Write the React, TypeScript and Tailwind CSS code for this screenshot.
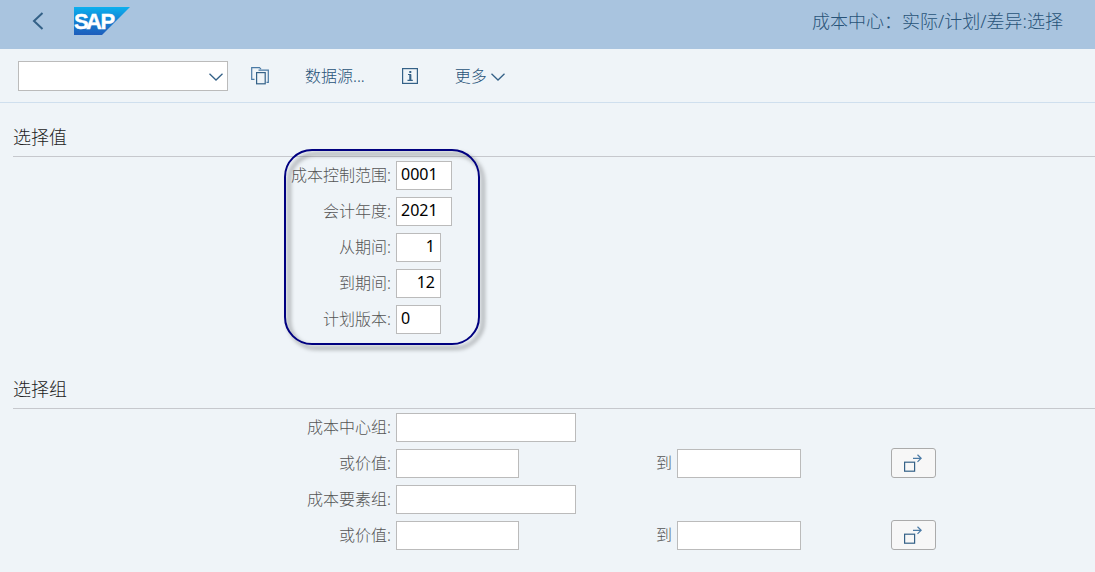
import type { ReactNode } from "react";

function SapLogo() {
  return (
    <svg width="56" height="28" viewBox="0 0 56 28" role="img" aria-label="SAP">
      <defs>
        <linearGradient id="sap-blue" x1="0" y1="0" x2="0" y2="1">
          <stop offset="0" stopColor="#0cb0ee" />
          <stop offset="0.5" stopColor="#1480d2" />
          <stop offset="1" stopColor="#1f5dbb" />
        </linearGradient>
      </defs>
      <path d="M0 0H56L28 28H0Z" fill="url(#sap-blue)" />
      <text
        x="0 12 26.5"
        y="22"
        fontFamily="Liberation Sans, sans-serif"
        fontSize="22"
        fontWeight="700"
        fill="#fff"
        stroke="#fff"
        strokeWidth="0.4"
      >
        SAP
      </text>
    </svg>
  );
}

function ChevronDown({ className }: { className?: string }) {
  return (
    <svg className={className} width="14" height="8" viewBox="0 0 14 8" fill="none" stroke="#346187" strokeWidth="1.3">
      <path d="M0.5 0.7L7 7L13.5 0.7" />
    </svg>
  );
}

function CopyIcon() {
  return (
    <svg width="18" height="18" viewBox="0 0 18 18" fill="none" stroke="#4a7aa5" strokeWidth="1.2">
      <path d="M3.5 12.4H0.7V0.7H8.5L10 2.2" />
      <path d="M7.5 3.2H17.3V15.4H15.5" />
      <rect x="5.6" y="5.6" width="8.6" height="11.2" stroke="#346187" />
    </svg>
  );
}

function InfoIcon() {
  return (
    <svg width="16" height="16" viewBox="0 0 16 16" fill="none" stroke="#346187">
      <rect x="0.6" y="0.6" width="14.8" height="14.8" strokeWidth="1.2" />
      <path d="M6 6.5H8.5V12M5.5 12.4H10.8" strokeWidth="1.2" />
      <path d="M8.3 6.5V12.4" strokeWidth="2" />
      <path d="M8.3 3V5" strokeWidth="2" />
    </svg>
  );
}

function MultiSelectIcon() {
  return (
    <svg width="18" height="18" viewBox="0 0 18 18" fill="none" stroke="#346187" strokeWidth="1.2">
      <rect x="0.6" y="8.2" width="10" height="9" />
      <path d="M9 4.3H17M13.5 0.7L17.2 4.3L13.5 7.9" stroke="#4a7aa5" />
    </svg>
  );
}

const inputClass =
  "h-[29px] border border-[#bbbbbb] bg-white pr-[5px] pl-1 pb-[3px] text-base font-normal text-black outline-none";
const labelClass = "mr-[5px] shrink-0 text-right text-base leading-[29px] text-[#555555]";

function Section({ title, children }: { title: string; children: ReactNode }) {
  return (
    <section className="pb-[21px] pl-[13px]">
      <h2 className="border-b border-[#c6c8cd] pt-5 pb-[5px] text-lg leading-7 text-[#222222]">{title}</h2>
      <div className="relative flex flex-col gap-[6px] pt-[3px]">{children}</div>
    </section>
  );
}

type FieldProps = {
  id: string;
  label: string;
  width: string;
  value?: string;
  children?: ReactNode;
};

function Field({ id, label, width, value, children }: FieldProps) {
  return (
    <div className="flex h-[30px] items-end">
      <label htmlFor={id} className={`${labelClass} w-[378px]`}>
        {label}:
      </label>
      <input id={id} type="text" defaultValue={value} className={`${inputClass} ${width}`} />
      {children}
    </div>
  );
}

function RangeEnd({ id }: { id: string }) {
  return (
    <>
      <label htmlFor={id} className={`${labelClass} w-[153px]`}>
        到
      </label>
      <input id={id} type="text" className={`${inputClass} w-[124px]`} />
      <button
        type="button"
        aria-label="多项选择"
        className="ml-[90px] flex h-[30px] w-[45px] items-center justify-center rounded-[3px] border border-[#ababab] bg-[#f7f7f7] pr-px"
      >
        <MultiSelectIcon />
      </button>
    </>
  );
}

export default function App() {
  return (
    <div className="min-h-screen bg-[#eff4f8] font-['Noto_Sans','Noto_Sans_CJK_SC',sans-serif] font-light">
      {/* Shell header */}
      <header className="flex h-[49px] items-center justify-between bg-[#a9c4df] pr-8 pb-[7px] pl-8">
        <div className="flex items-center gap-[30px]">
          <button type="button" aria-label="返回">
            <svg width="12" height="18" viewBox="0 0 12 18" fill="none" stroke="#346187" strokeWidth="2">
              <path d="M10.5 1L2 9L10.5 17" />
            </svg>
          </button>
          <SapLogo />
        </div>
        <h1 className="text-lg text-[#285378]">成本中心：实际/计划/差异:选择</h1>
      </header>

      {/* Toolbar */}
      <div className="flex h-[54px] items-center border-b border-[#cfdfee] pl-[18px] text-base text-[#285378]">
        <div className="relative">
          <select
            aria-label="命令"
            className="block h-[30px] w-[210px] appearance-none border border-[#bbbbbb] bg-white outline-none"
          >
            <option></option>
          </select>
          <ChevronDown className="pointer-events-none absolute top-[12px] right-[5px]" />
        </div>
        <button type="button" aria-label="复制" className="ml-[23px]">
          <CopyIcon />
        </button>
        <button type="button" className="ml-9">
          数据源...
        </button>
        <button type="button" aria-label="信息" className="ml-[37px]">
          <InfoIcon />
        </button>
        <button type="button" className="ml-[37px] flex items-center gap-[4px]">
          更多
          <ChevronDown className="mt-[3px]" />
        </button>
      </div>

      <main>
        <Section title="选择值">
          <Field id="area" label="成本控制范围" width="w-[56px]" value="0001" />
          <Field id="year" label="会计年度" width="w-[56px]" value="2021" />
          <Field id="from" label="从期间" width="w-[45px] text-right" value="1" />
          <Field id="to" label="到期间" width="w-[45px] text-right" value="12" />
          <Field id="version" label="计划版本" width="w-[45px]" value="0" />
          {/* Callout frame around the fields */}
          <div className="pointer-events-none absolute -top-2 left-[271px] h-[196px] w-[196px] rounded-[28px] border-2 border-[#000080] drop-shadow-[4px_4px_2px_rgba(0,0,0,0.5)]" />
        </Section>

        <Section title="选择组">
          <Field id="center-group" label="成本中心组" width="w-[180px]" />
          <Field id="center-from" label="或价值" width="w-[123px]">
            <RangeEnd id="center-to" />
          </Field>
          <Field id="element-group" label="成本要素组" width="w-[180px]" />
          <Field id="element-from" label="或价值" width="w-[123px]">
            <RangeEnd id="element-to" />
          </Field>
        </Section>
      </main>
    </div>
  );
}
